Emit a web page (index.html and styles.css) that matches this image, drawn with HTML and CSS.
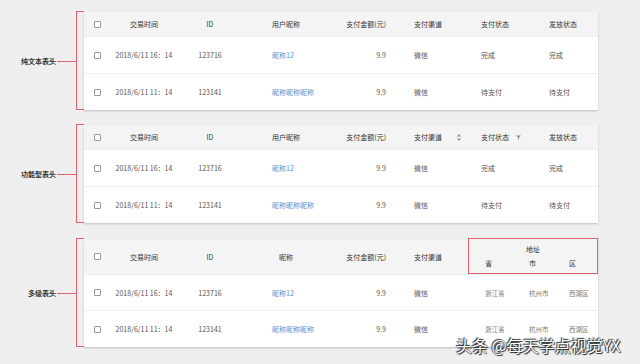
FILE: index.html
```html
<!DOCTYPE html>
<html lang="zh">
<head>
<meta charset="utf-8">
<link rel="stylesheet" href="styles.css">
</head>
<body>
<div class="page">
  <section class="section">
    <div class="side"><span class="label">纯文本表头</span><span class="connector"></span><span class="bracket"></span></div>
    <div class="card">
      <div class="row head cols8">
        <div class="cell"><span class="cb"></span></div>
        <div class="cell center">交易时间</div>
        <div class="cell center">ID</div>
        <div class="cell l34">用户昵称</div>
        <div class="cell right">支付金额(元)</div>
        <div class="cell l20">支付渠道</div>
        <div class="cell l7">支付状态</div>
        <div class="cell l5">发放状态</div>
      </div>
      <div class="row cols8">
        <div class="cell"><span class="cb"></span></div>
        <div class="cell center">2018/6/11 16：14</div>
        <div class="cell center">123716</div>
        <div class="cell l34 link">昵称12</div>
        <div class="cell right">9.9</div>
        <div class="cell l20">微信</div>
        <div class="cell l7">完成</div>
        <div class="cell l5">完成</div>
      </div>
      <div class="row cols8">
        <div class="cell"><span class="cb"></span></div>
        <div class="cell center">2018/6/11 11：14</div>
        <div class="cell center">123141</div>
        <div class="cell l34 link">昵称昵称昵称</div>
        <div class="cell right">9.9</div>
        <div class="cell l20">微信</div>
        <div class="cell l7">待支付</div>
        <div class="cell l5">待支付</div>
      </div>
    </div>
  </section>

  <section class="section">
    <div class="side"><span class="label">功能型表头</span><span class="connector"></span><span class="bracket"></span></div>
    <div class="card">
      <div class="row head cols8">
        <div class="cell"><span class="cb"></span></div>
        <div class="cell center">交易时间</div>
        <div class="cell center">ID</div>
        <div class="cell l34">用户昵称</div>
        <div class="cell right">支付金额(元)</div>
        <div class="cell l20 withicon">支付渠道
          <svg class="sort" width="4" height="7" viewBox="0 0 4 7"><path d="M2 0 L4 2.5 L0 2.5 Z M0 4.5 L4 4.5 L2 7 Z" fill="#8a8a8a"/></svg>
        </div>
        <div class="cell l7 withicon">支付状态
          <svg class="filter" width="5" height="5" viewBox="0 0 5 5"><path d="M0 0.5 L5 0.5 L3 2.6 L3 4.6 L2 4 L2 2.6 Z" fill="#8a8a8a"/></svg>
        </div>
        <div class="cell l5">发放状态</div>
      </div>
      <div class="row cols8">
        <div class="cell"><span class="cb"></span></div>
        <div class="cell center">2018/6/11 16：14</div>
        <div class="cell center">123716</div>
        <div class="cell l34 link">昵称12</div>
        <div class="cell right">9.9</div>
        <div class="cell l20">微信</div>
        <div class="cell l7">完成</div>
        <div class="cell l5">完成</div>
      </div>
      <div class="row cols8">
        <div class="cell"><span class="cb"></span></div>
        <div class="cell center">2018/6/11 11：14</div>
        <div class="cell center">123141</div>
        <div class="cell l34 link">昵称昵称昵称</div>
        <div class="cell right">9.9</div>
        <div class="cell l20">微信</div>
        <div class="cell l7">待支付</div>
        <div class="cell l5">待支付</div>
      </div>
    </div>
  </section>

  <section class="section third">
    <div class="side"><span class="label">多级表头</span><span class="connector"></span><span class="bracket"></span></div>
    <div class="card">
      <div class="row head tall cols7">
        <div class="cell"><span class="cb"></span></div>
        <div class="cell center">交易时间</div>
        <div class="cell center">ID</div>
        <div class="cell l41">昵称</div>
        <div class="cell right">支付金额(元)</div>
        <div class="cell l20">支付渠道</div>
        <div class="group">
          <div class="group-title">地址</div>
          <div class="subcols">
            <span>省</span><span>市</span><span>区</span>
          </div>
        </div>
      </div>
      <div class="row r36 cols7">
        <div class="cell"><span class="cb"></span></div>
        <div class="cell center">2018/6/11 16：14</div>
        <div class="cell center">123716</div>
        <div class="cell l34 link">昵称12</div>
        <div class="cell right">9.9</div>
        <div class="cell l20">微信</div>
        <div class="cell addr"><span>浙江省</span><span>杭州市</span><span>西湖区</span></div>
      </div>
      <div class="row r37 cols7">
        <div class="cell"><span class="cb"></span></div>
        <div class="cell center">2018/6/11 11：14</div>
        <div class="cell center">123141</div>
        <div class="cell l34 link">昵称昵称昵称</div>
        <div class="cell right">9.9</div>
        <div class="cell l20">微信</div>
        <div class="cell addr"><span>浙江省</span><span>杭州市</span><span>西湖区</span></div>
      </div>
    </div>
  </section>
</div>
<div class="watermark">头条 @每天学点视觉YX</div>
</body>
</html>
```

FILE: styles.css
```css
html, body {
  margin: 0;
  padding: 0;
}
body {
  width: 640px;
  height: 364px;
  background: #efefef;
  font-family: "Noto Sans CJK SC", "Noto Sans", sans-serif;
  position: relative;
  overflow: hidden;
}
.page {
  padding-top: 12px;
  display: flex;
  flex-direction: column;
  gap: 15px;
}
.section {
  display: flex;
}
.section.third {
  margin-top: 1px;
}
.side {
  width: 84px;
  display: flex;
  align-items: center;
}
.label {
  flex: 1;
  text-align: right;
  font-size: 7px;
  font-weight: bold;
  color: #333;
  white-space: nowrap;
  padding-right: 1px;
}
.connector {
  width: 19px;
  height: 1px;
  background: #e0606e;
}
.bracket {
  align-self: stretch;
  width: 8px;
  box-sizing: border-box;
  border: 1px solid #e0606e;
  border-right: none;
  margin: -1px 0 0 0;
}
.card {
  width: 514px;
  background: #fff;
  box-shadow: 0 1px 2px rgba(0, 0, 0, 0.2);
}
.row {
  display: grid;
  align-items: center;
  height: 37px;
  box-sizing: border-box;
  border-top: 1px solid #eeeeee;
}
.row.head {
  height: 24px;
  border-top: none;
  background: #f4f4f4;
}
.row.head .cell {
  color: #333;
}
.row.tall {
  height: 35px;
}
.row.r36 {
  height: 36px;
}
.row.r37 {
  height: 37px;
}
.cols8 {
  grid-template-columns: 22px 76px 56px 106px 50px 80px 70px 54px;
}
.cols7 {
  grid-template-columns: 22px 76px 56px 106px 50px 74px 130px;
}
.cell {
  font-size: 7px;
  color: #555;
  white-space: nowrap;
}
.cb {
  display: block;
  width: 7px;
  height: 7px;
  margin-left: 10px;
  box-sizing: border-box;
  border: 1px solid #999;
  border-radius: 1px;
  background: #fff;
}
.center { text-align: center; }
.right { text-align: right; padding-right: 8px; }
.l34 { padding-left: 34px; }
.l41 { padding-left: 41px; }
.l20 { padding-left: 20px; }
.l7 { padding-left: 7px; }
.l5 { padding-left: 5px; }
.link { color: #5a8fcf; }
.withicon {
  display: flex;
  align-items: center;
}
.sort { margin-left: 15px; }
.filter { margin-left: 7px; }
.group {
  align-self: stretch;
  box-sizing: border-box;
  border: 1px solid #e0606e;
  margin-top: -1px;
  display: flex;
  flex-direction: column;
  justify-content: center;
  gap: 4px;
  font-size: 7px;
  color: #333;
}
.group-title {
  text-align: center;
}
.subcols,
.addr {
  display: grid;
  grid-template-columns: 44px 40px 46px;
}
.subcols span {
  padding-left: 16px;
}
.addr span {
  padding-left: 17px;
  font-size: 6.5px;
  color: #777;
}
.watermark {
  position: absolute;
  left: 456px;
  top: 337px;
  font-size: 16px;
  line-height: 16px;
  color: #fff;
  white-space: nowrap;
  text-shadow: 0 0 1px #222, 1px 1px 1px #222, -1px -1px 1px #333;
}
```
